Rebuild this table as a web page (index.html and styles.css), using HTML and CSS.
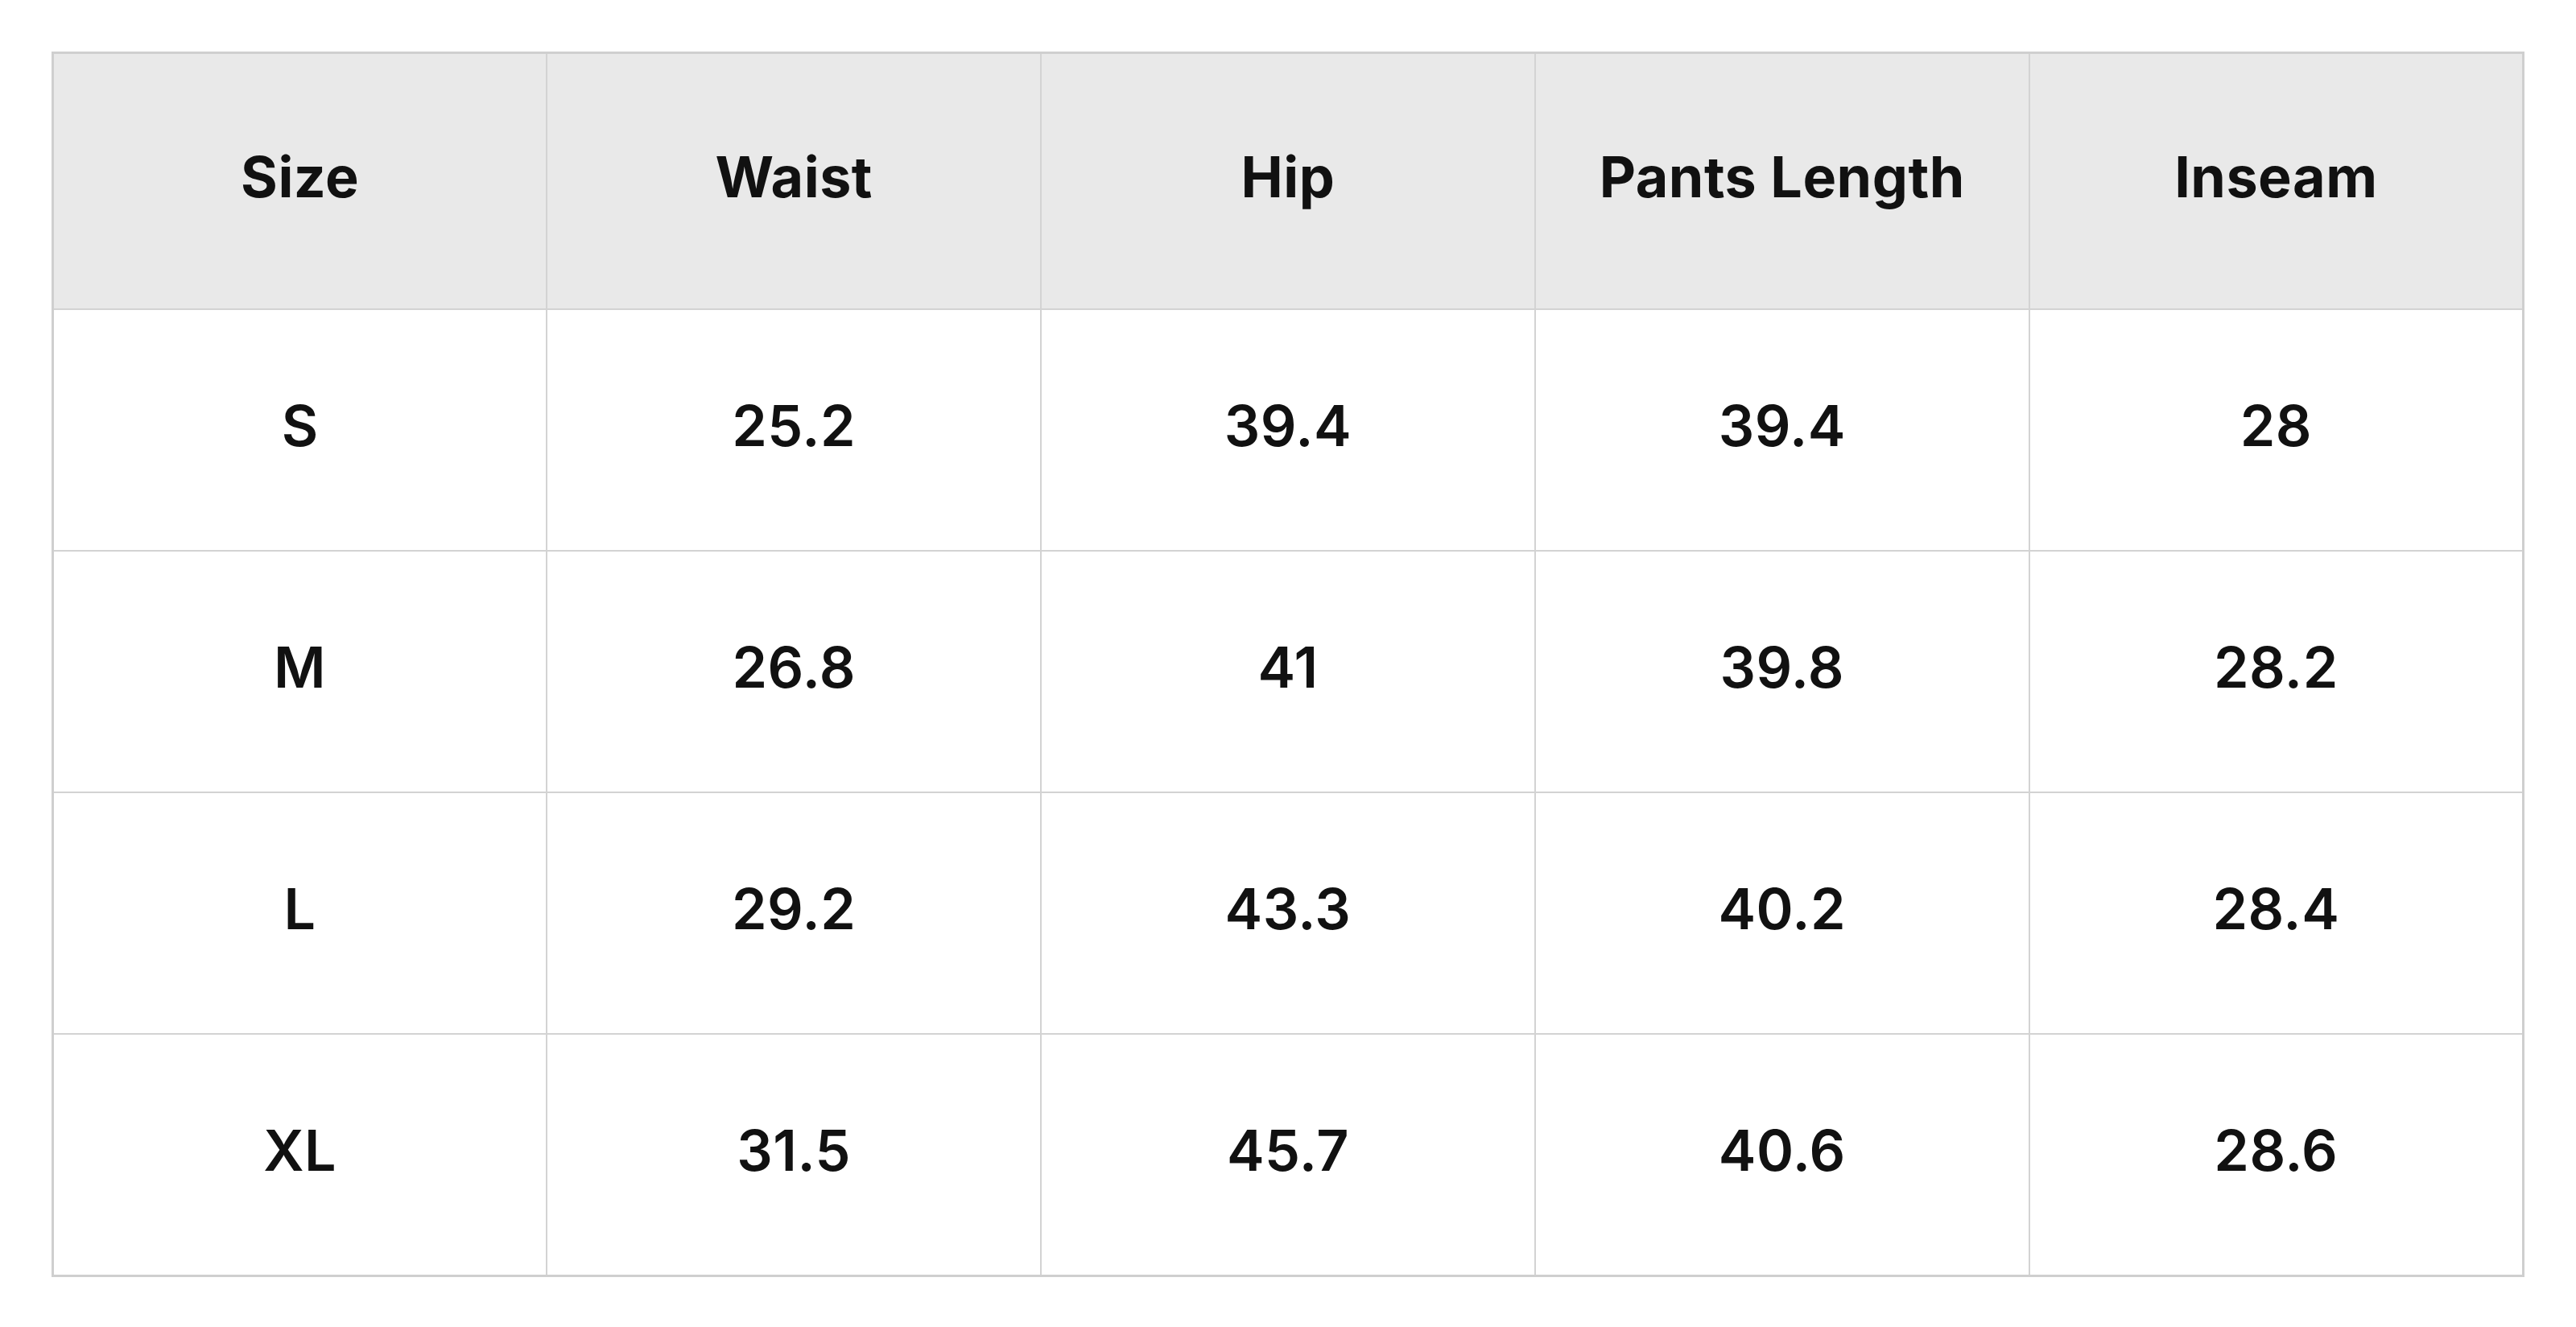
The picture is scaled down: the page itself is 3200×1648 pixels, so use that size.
FILE: index.html
```html
<!DOCTYPE html>
<html lang="en">
<head>
<meta charset="utf-8">
<title>Size Chart</title>
<link rel="stylesheet" href="styles.css">
</head>
<body>
<div class="page">
  <table class="size-table">
    <thead>
      <tr>
        <th>Size</th>
        <th>Waist</th>
        <th>Hip</th>
        <th>Pants Length</th>
        <th>Inseam</th>
      </tr>
    </thead>
    <tbody>
      <tr><td>S</td><td>25.2</td><td>39.4</td><td>39.4</td><td>28</td></tr>
      <tr><td>M</td><td>26.8</td><td>41</td><td>39.8</td><td>28.2</td></tr>
      <tr><td>L</td><td>29.2</td><td>43.3</td><td>40.2</td><td>28.4</td></tr>
      <tr><td>XL</td><td>31.5</td><td>45.7</td><td>40.6</td><td>28.6</td></tr>
    </tbody>
  </table>
</div>
</body>
</html>
```

FILE: styles.css
```css
html, body {
  margin: 0;
  padding: 0;
  background: #ffffff;
}

.page {
  padding: 64px;
  font-family: "Inter", "Roboto", "Liberation Sans", sans-serif;
  color: #111111;
}

.size-table {
  width: 100%;
  border-collapse: collapse;
  table-layout: fixed;
  border: 3px solid #cfcfcf;
}

.size-table th,
.size-table td {
  border: 2px solid #d3d3d3;
  text-align: center;
  vertical-align: middle;
  font-size: 70px;
  padding: 0 0 12px 0;
  letter-spacing: 0.5px;
}

.size-table th {
  background: #e9e9e9;
  font-weight: 700;
  height: 304px;
}

.size-table td {
  font-weight: 600;
  height: 286px;
}
```
